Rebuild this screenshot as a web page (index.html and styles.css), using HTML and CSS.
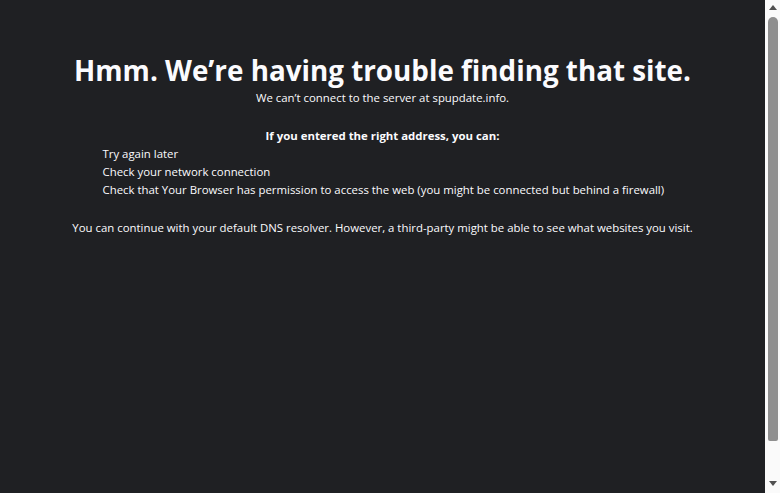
FILE: index.html
```html
<!DOCTYPE html>
<html lang="en">
<head>
<meta charset="utf-8">
<title>Server Not Found</title>
<link rel="stylesheet" href="styles.css">
</head>
<body>
<div class="window">
  <main class="page">
    <div class="container">
      <h1 class="title">Hmm. We’re having trouble finding that site.</h1>
      <p class="sub">We can’t connect to the server at spupdate.info.</p>
      <p class="lead">If you entered the right address, you can:</p>
      <ul class="tips">
        <li>Try again later</li>
        <li>Check your network connection</li>
        <li>Check that Your Browser has permission to access the web (you might be connected but behind a firewall)</li>
      </ul>
      <p class="note">You can continue with your default DNS resolver. However, a third-party might be able to see what websites you visit.</p>
    </div>
  </main>
  <aside class="scrollbar" aria-hidden="true">
    <div class="arrow arrow-up"></div>
    <div class="track"><div class="thumb"></div></div>
    <div class="arrow arrow-down"></div>
  </aside>
</div>
</body>
</html>
```

FILE: styles.css
```css
html, body {
  margin: 0;
  height: 100%;
  background: #1f2023;
}
body {
  color: #fbfbfe;
  font-family: "Open Sans", "Noto Sans", sans-serif;
  font-size: 11.4px;
  overflow: hidden;
}
.window {
  display: flex;
  height: 100%;
}
.page {
  flex: 1;
  min-width: 0;
}
.container {
  width: 640px;
  margin: 0 auto;
  padding-top: 50px;
}
.title {
  margin: 0 -80px;
  text-align: center;
  font-size: 27.8px;
  font-weight: 700;
  line-height: 40px;
}
.sub {
  margin: -1px 0 0;
  text-align: center;
  line-height: 18px;
}
.lead {
  margin: 20px 0 0;
  text-align: center;
  font-weight: 700;
  line-height: 18px;
}
.tips {
  list-style: none;
  margin: 0;
  padding: 0 0 0 40px;
  line-height: 18px;
}
.note {
  margin: 20px 0 0;
  text-align: center;
  line-height: 18px;
}
.scrollbar {
  width: 15px;
  background: #fafafa;
  display: flex;
  flex-direction: column;
  align-items: center;
}
.arrow {
  width: 0;
  height: 0;
  border-left: 4px solid transparent;
  border-right: 4px solid transparent;
}
.arrow-up {
  margin-top: 5px;
  border-bottom: 5px solid #505050;
}
.arrow-down {
  margin-bottom: 7px;
  border-top: 5px solid #505050;
}
.track {
  flex: 1;
  width: 100%;
  padding: 7px 2px 0 3px;
  box-sizing: border-box;
  display: flex;
  flex-direction: column;
}
.thumb {
  height: 424px;
  background: #8f8f8f;
  border-radius: 5px 5px 2px 2px;
}
```
